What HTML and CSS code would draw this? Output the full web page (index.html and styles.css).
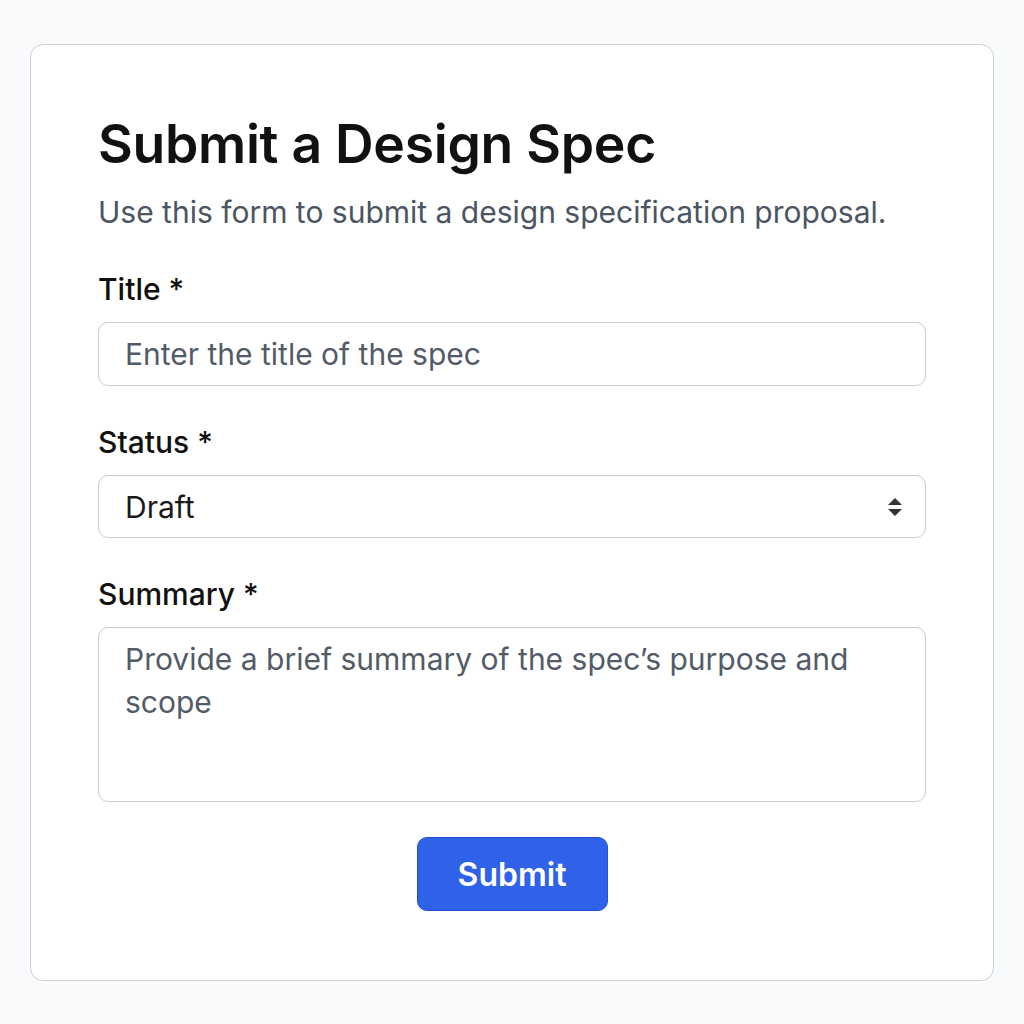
FILE: index.html
```html
<!DOCTYPE html>
<html lang="en">
<head>
<meta charset="utf-8">
<title>Submit a Design Spec</title>
<link rel="stylesheet" href="styles.css">
</head>
<body>
<main class="card">
  <h1 class="title">Submit a Design Spec</h1>
  <p class="subtitle">Use this form to submit a design specification proposal.</p>
  <form class="form">
    <div class="field">
      <label class="label" for="title">Title *</label>
      <input class="input" id="title" type="text" placeholder="Enter the title of the spec">
    </div>
    <div class="field">
      <label class="label" for="status">Status *</label>
      <div class="select">
        <span class="select-value">Draft</span>
        <svg class="select-arrow" width="16" height="22" viewBox="0 0 16 22"><path d="M8 2 L15 9 H1 Z" fill="#333"/><path d="M8 20 L15 13 H1 Z" fill="#333"/></svg>
      </div>
    </div>
    <div class="field">
      <label class="label" for="summary">Summary *</label>
      <textarea class="textarea" id="summary" placeholder="Provide a brief summary of the spec’s purpose and scope"></textarea>
    </div>
    <div class="actions">
      <button class="button" type="button">Submit</button>
    </div>
  </form>
</main>
</body>
</html>
```
FILE: styles.css
```css
* { box-sizing: border-box; }
html, body { margin: 0; padding: 0; }
body {
  background: #f9fafb;
  font-family: Inter, "Noto Sans", sans-serif;
  padding: 44px 30px 0 30px;
}
.card {
  background: #ffffff;
  border: 1.5px solid #ccd1d6;
  border-radius: 13px;
  padding: 67px 67px 70px 67px;
  height: 937px;
}
.title {
  margin: 0;
  font-size: 53.5px;
  font-weight: 600;
  line-height: 64px;
  color: #111111;
  letter-spacing: -0.3px;
}
.subtitle {
  margin: 17px 0 0 0;
  font-size: 30px;
  line-height: 38px;
  color: #4b5563;
}
.form { display: flex; flex-direction: column; }
.field { display: flex; flex-direction: column; margin-top: 40px; }
.field + .field { margin-top: 38px; }
.label {
  font-size: 30px;
  font-weight: 500;
  line-height: 36px;
  color: #111111;
  margin-bottom: 15px;
}
.input, .select, .textarea {
  width: 100%;
  border: 1.5px solid #c9ced4;
  border-radius: 10px;
  background: #fff;
  font-family: Inter, "Noto Sans", sans-serif;
  font-size: 30px;
  color: #111;
}
.input {
  height: 64px;
  padding: 0 26px;
}
.input::placeholder, .textarea::placeholder { color: #535b66; }
.select {
  height: 63px;
  padding: 0 22px 0 26px;
  display: flex;
  align-items: center;
  justify-content: space-between;
}
.select-value { color: #1a1a1a; }
.textarea {
  height: 175px;
  padding: 10px 26px;
  line-height: 43px;
  resize: none;
  display: block;
}
.actions { display: flex; justify-content: center; margin-top: 35px; }
.button {
  width: 191px;
  height: 74px;
  background: #2f62e8;
  border: 1.5px solid #1f4fd8;
  border-radius: 10px;
  color: #fff;
  font-family: Inter, "Noto Sans", sans-serif;
  font-size: 32px;
  font-weight: 600;
}
```
